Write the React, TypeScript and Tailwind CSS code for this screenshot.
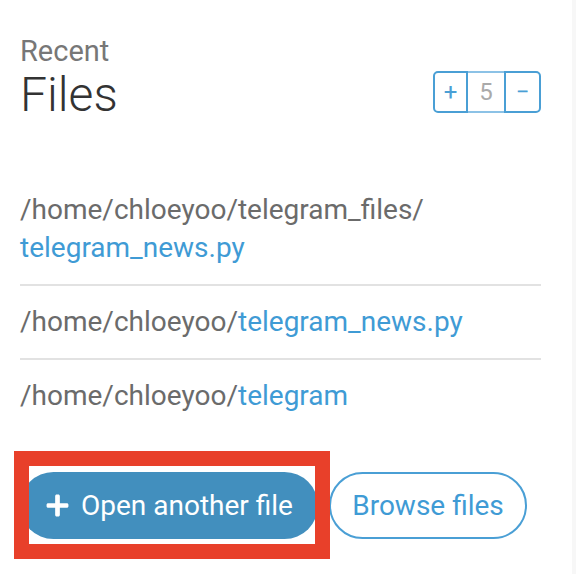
import React from "react";
import { FaPlus } from "react-icons/fa";

const rows = [
  { dir: "/home/chloeyoo/telegram_files/", file: "telegram_news.py", wrap: true },
  { dir: "/home/chloeyoo/", file: "telegram_news.py", wrap: false },
  { dir: "/home/chloeyoo/", file: "telegram", wrap: false },
];

const Counter = () => (
  <div className="flex h-[42px] w-[108px] text-[24px] leading-none">
    <button className="flex w-[35px] items-center justify-center rounded-l-[5px] border-2 border-[#4a9fd5] text-[#4a9fd5]">
      +
    </button>
    <div className="flex w-[36px] items-center justify-center border-y-2 border-[#8cc2e6] text-[#aaaaaa]">
      5
    </div>
    <button className="flex w-[37px] items-center justify-center rounded-r-[5px] border-2 border-[#4a9fd5] text-[#4a9fd5]">
      −
    </button>
  </div>
);

export default function App() {
  return (
    <div className="min-h-[574px] w-[588px] bg-white font-['Roboto',sans-serif]">
      <div className="min-h-[574px] w-[576px] border-r-4 border-[#f7f7f7] pl-5 pr-[31px] pt-[35px]">
        <div className="text-[29px] leading-[32px] text-[#777777]">Recent</div>
        <div className="mt-[4px] flex items-start justify-between">
          <h1 className="text-[48px] font-light leading-[48px] text-[#333333]">Files</h1>
          <Counter />
        </div>

        <ul className="mt-[55px] text-[28px] leading-[38px]">
          {rows.map((r, i) => (
            <li
              key={i}
              className={
                "py-[17px] " + (i < rows.length - 1 ? "border-b-2 border-[#e2e2e2]" : "")
              }
            >
              <span className="text-[#6b6b6b]">{r.dir}</span>
              {r.wrap && <br />}
              <span className="text-[#3f9bd5]">{r.file}</span>
            </li>
          ))}
        </ul>

        <div className="relative mt-[40px] flex gap-[11px]">
          <button className="flex h-[67px] w-[298px] items-center gap-[11px] rounded-full bg-[#428fbe] pl-[25px] text-[28px] text-white">
            <FaPlus className="h-[25px] w-[25px]" />
            Open another file
          </button>
          <button className="h-[67px] w-[198px] rounded-full border-2 border-[#4a9fd5] text-[28px] text-[#3f9bd5]">
            Browse files
          </button>
          <div className="pointer-events-none absolute left-[-6px] top-[-21px] h-[108px] w-[316px] border-[15px] border-[#e8402a]" />
        </div>
      </div>
    </div>
  );
}
